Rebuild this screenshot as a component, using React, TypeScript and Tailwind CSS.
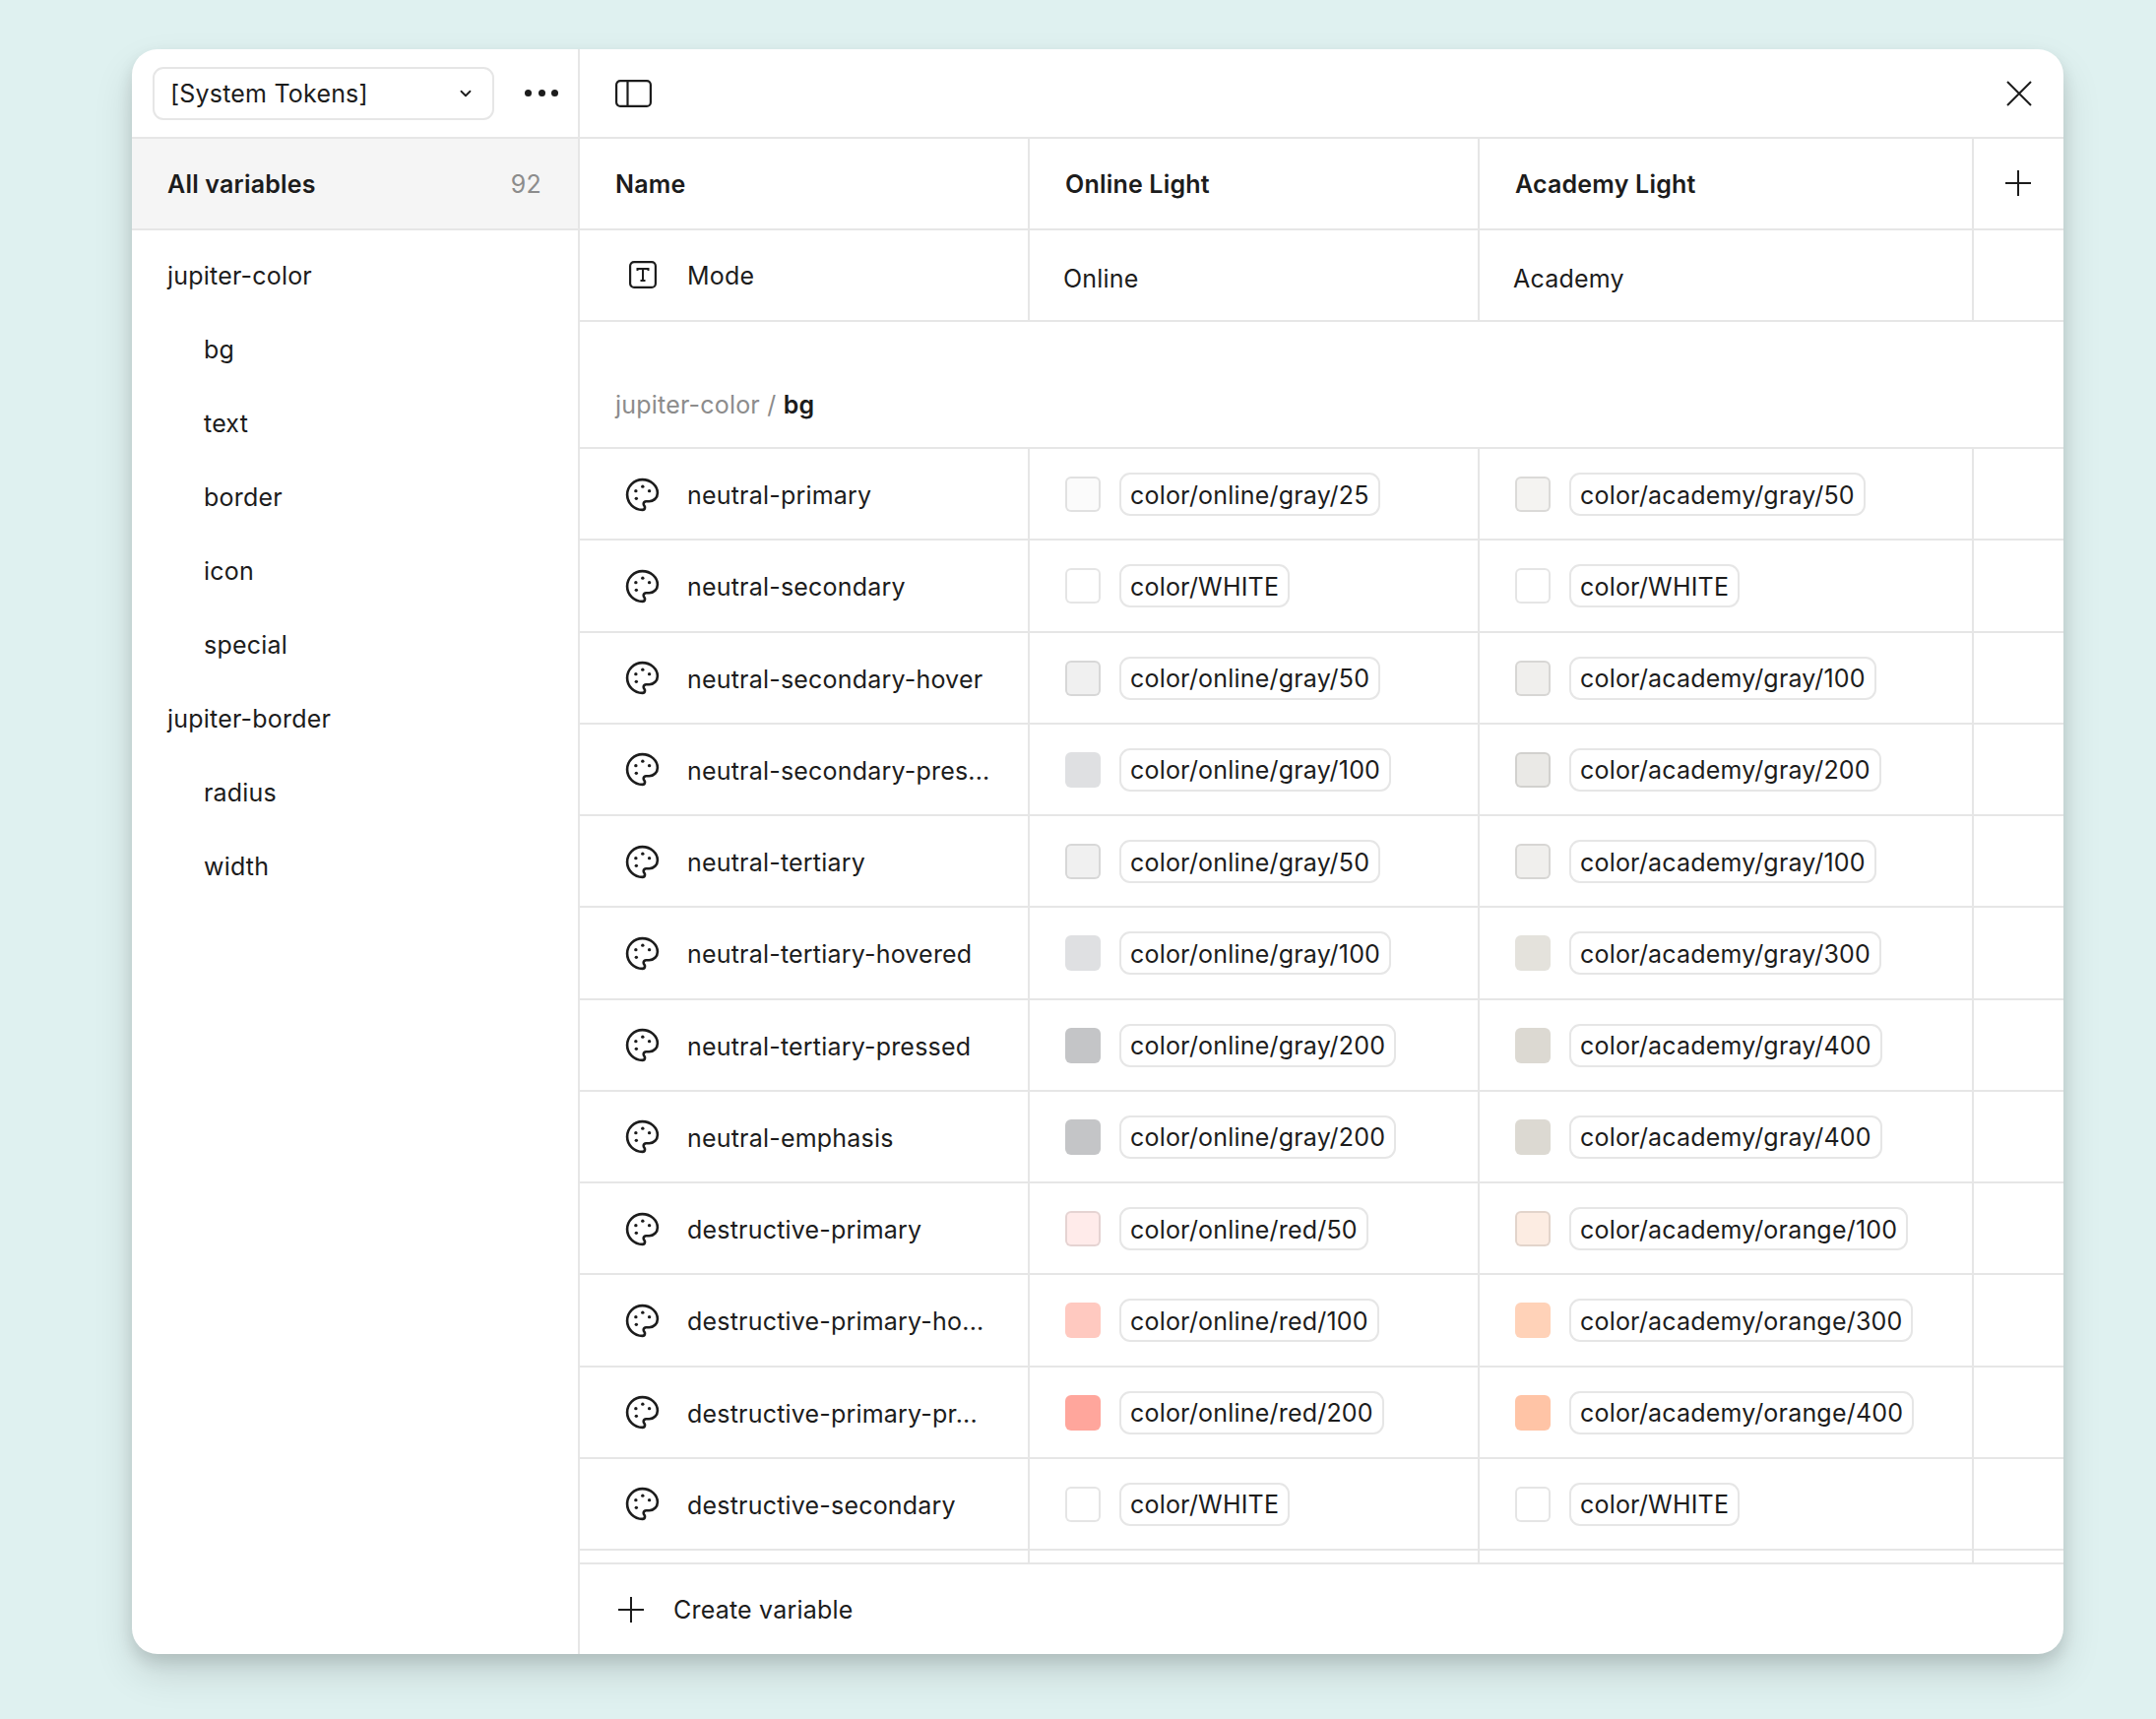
import React from "react";
import { ChevronDown } from "lucide-react";

type Cell = { label: string; color: string; edge?: boolean };
type Row = { name: string; online: Cell; academy: Cell };

const WHITE: Cell = { label: "color/WHITE", color: "#ffffff", edge: true };

const rows: Row[] = [
  { name: "neutral-primary", online: { label: "color/online/gray/25", color: "#fbfbfb", edge: true }, academy: { label: "color/academy/gray/50", color: "#f4f3f1", edge: true } },
  { name: "neutral-secondary", online: WHITE, academy: WHITE },
  { name: "neutral-secondary-hover", online: { label: "color/online/gray/50", color: "#f0f0f0", edge: true }, academy: { label: "color/academy/gray/100", color: "#f0efed", edge: true } },
  { name: "neutral-secondary-pres...", online: { label: "color/online/gray/100", color: "#dfe0e2" }, academy: { label: "color/academy/gray/200", color: "#eae9e6", edge: true } },
  { name: "neutral-tertiary", online: { label: "color/online/gray/50", color: "#f0f0f0", edge: true }, academy: { label: "color/academy/gray/100", color: "#f0efed", edge: true } },
  { name: "neutral-tertiary-hovered", online: { label: "color/online/gray/100", color: "#dfe0e2" }, academy: { label: "color/academy/gray/300", color: "#e4e2dc" } },
  { name: "neutral-tertiary-pressed", online: { label: "color/online/gray/200", color: "#c4c5c7" }, academy: { label: "color/academy/gray/400", color: "#dcd9d2" } },
  { name: "neutral-emphasis", online: { label: "color/online/gray/200", color: "#c4c5c7" }, academy: { label: "color/academy/gray/400", color: "#dcd9d2" } },
  { name: "destructive-primary", online: { label: "color/online/red/50", color: "#ffebea", edge: true }, academy: { label: "color/academy/orange/100", color: "#fcece2", edge: true } },
  { name: "destructive-primary-ho...", online: { label: "color/online/red/100", color: "#ffc9c0" }, academy: { label: "color/academy/orange/300", color: "#ffd2b8" } },
  { name: "destructive-primary-pr...", online: { label: "color/online/red/200", color: "#ffa69c" }, academy: { label: "color/academy/orange/400", color: "#ffc4a6" } },
  { name: "destructive-secondary", online: WHITE, academy: WHITE },
];

const groups = [
  { name: "jupiter-color", indent: false },
  { name: "bg", indent: true },
  { name: "text", indent: true },
  { name: "border", indent: true },
  { name: "icon", indent: true },
  { name: "special", indent: true },
  { name: "jupiter-border", indent: false },
  { name: "radius", indent: true },
  { name: "width", indent: true },
];

const gridCols = "grid grid-cols-[457px_457px_502px_1fr]";

const PaletteIcon = () => (
  <svg width="37" height="37" viewBox="0 0 24 24" fill="none" stroke="#1c1c1c" strokeWidth="1.7" strokeLinecap="round" strokeLinejoin="round">
    <path d="M12 2C6.5 2 2 6.5 2 12s4.5 10 10 10c.926 0 1.648-.746 1.648-1.688 0-.437-.18-.835-.437-1.125-.29-.289-.438-.652-.438-1.125a1.64 1.64 0 0 1 1.668-1.668h1.996c3.051 0 5.555-2.503 5.555-5.554C21.965 6.012 17.461 2 12 2z" />
    <g fill="#1c1c1c" stroke="none">
      <circle cx="12.2" cy="6.6" r="1.1" />
      <circle cx="16.6" cy="9.5" r="1.1" />
      <circle cx="7.7" cy="9.5" r="1.1" />
      <circle cx="8" cy="14.5" r="1.1" />
    </g>
  </svg>
);

const PlusIcon = () => (
  <svg width="28" height="28" viewBox="0 0 28 28" fill="none" stroke="#1c1c1c" strokeWidth="2">
    <path d="M14 1v26M1 14h26" />
  </svg>
);

const TokenCell = ({ cell }: { cell: Cell }) => (
  <div className="flex items-center border-r-2 border-[#e6e6e6] pl-[36px] pt-[1px]">
    <span
      className={`h-[36px] w-[36px] rounded-[6px] ${cell.edge ? "border-2 border-black/10" : ""}`}
      style={{ backgroundColor: cell.color }}
    />
    <span className="ml-[19px] flex h-[44px] items-center rounded-[11px] border-2 border-[#e6e6e6] px-[9px] pt-[1px]">{cell.label}</span>
  </div>
);

const App = () => (
  <div className="h-[1746px] w-[2190px] bg-[#dff1f0] pl-[134px] pt-[50px] font-['Inter',sans-serif] text-[25px] leading-[32px] tracking-[0.2px] text-[#1c1c1c]">
    <div className="flex h-[1630px] w-[1962px] overflow-hidden rounded-[26px] bg-white shadow-[0_8px_16px_rgba(0,0,0,0.12),0_20px_40px_rgba(0,0,0,0.12)]">
      {/* sidebar */}
      <div className="w-[455px] shrink-0 border-r-2 border-[#e6e6e6]">
        <div className="flex h-[90.7px] items-center border-b-2 border-[#e6e6e6] pl-[21px] pt-[1px]">
          <div className="flex h-[54px] w-[347px] items-center justify-between rounded-[11px] border-2 border-[#e6e6e6] pl-[16px] pr-[18px]">
            <span className="pt-[1px]">[System Tokens]</span>
            <ChevronDown size={18} strokeWidth={2.4} />
          </div>
          <div className="ml-[31px] flex items-center gap-[6.5px]">
            <span className="h-[7px] w-[7px] rounded-full bg-[#1c1c1c]" />
            <span className="h-[7px] w-[7px] rounded-full bg-[#1c1c1c]" />
            <span className="h-[7px] w-[7px] rounded-full bg-[#1c1c1c]" />
          </div>
        </div>
        <div className="flex h-[93px] items-center justify-between border-b-2 border-[#e6e6e6] bg-[#f5f5f5] pl-[36px] pr-[37px] pt-[2px]">
          <span className="font-semibold">All variables</span>
          <span className="text-[#8c8c8c]">92</span>
        </div>
        <div className="pt-[8px]">
          {groups.map((g) => (
            <div key={g.name} className={`flex h-[75px] items-center pt-[2px] ${g.indent ? "pl-[73px]" : "pl-[36px]"}`}>
              {g.name}
            </div>
          ))}
        </div>
      </div>

      {/* main */}
      <div className="flex min-w-0 flex-1 flex-col">
        <div className="flex h-[90.7px] items-center justify-between border-b-2 border-[#e6e6e6] pl-[36px] pr-[32px] pt-[2px]">
          <svg width="37" height="28" viewBox="0 0 37 28" fill="none" stroke="#1c1c1c" strokeWidth="2.2">
            <rect x="1.1" y="1.1" width="34.8" height="25.8" rx="4" />
            <path d="M12.5 1v26" />
          </svg>
          <svg width="26" height="26" viewBox="0 0 26 26" fill="none" stroke="#1c1c1c" strokeWidth="2">
            <path d="M1 1l24 24M25 1L1 25" />
          </svg>
        </div>

        <div className={`${gridCols} h-[93.3px] border-b-2 border-[#e6e6e6] font-semibold`}>
          <div className="flex items-center border-r-2 border-[#e6e6e6] pl-[36px] pt-[2px]">Name</div>
          <div className="flex items-center border-r-2 border-[#e6e6e6] pl-[36px] pt-[2px]">Online Light</div>
          <div className="flex items-center border-r-2 border-[#e6e6e6] pl-[36px] pt-[2px]">Academy Light</div>
          <div className="flex items-center pl-[31px]">
            <PlusIcon />
          </div>
        </div>

        <div className={`${gridCols} h-[93.3px] border-b-2 border-[#e6e6e6]`}>
          <div className="flex items-center border-r-2 border-[#e6e6e6] pl-[50px]">
            <svg width="28" height="28" viewBox="0 0 28 28" fill="none" stroke="#1c1c1c" strokeWidth="2.2">
              <rect x="1.1" y="1.1" width="25.8" height="25.8" rx="4" />
              <path d="M8.5 10V8h11v2M14 8v12M11.5 20h5" strokeWidth="2" />
            </svg>
            <span className="ml-[31px] pt-[2px]">Mode</span>
          </div>
          <div className="flex items-center border-r-2 border-[#e6e6e6] pl-[34px] pt-[7px]">Online</div>
          <div className="flex items-center border-r-2 border-[#e6e6e6] pl-[34px] pt-[7px]">Academy</div>
          <div />
        </div>

        <div className="h-[129.4px] border-b-2 border-[#e6e6e6] pl-[36px] pt-[68px]">
          <span className="text-[#8c8c8c]">jupiter-color / </span>
          <span className="font-semibold">bg</span>
        </div>

        <div className="flex-1">
          {rows.map((r) => (
            <div key={r.name} className={`${gridCols} h-[93.25px] border-b-2 border-[#e6e6e6]`}>
              <div className="flex items-center border-r-2 border-[#e6e6e6] pl-[45px] pt-[1px]">
                <PaletteIcon />
                <span className="ml-[27px] pt-[2px]">{r.name}</span>
              </div>
              <TokenCell cell={r.online} />
              <TokenCell cell={r.academy} />
              <div />
            </div>
          ))}
          <div className={`${gridCols} h-[12px]`}>
            <div className="border-r-2 border-[#e6e6e6]" />
            <div className="border-r-2 border-[#e6e6e6]" />
            <div className="border-r-2 border-[#e6e6e6]" />
            <div />
          </div>
        </div>

        <div className="flex h-[93px] shrink-0 items-center border-t-2 border-[#e6e6e6] pl-[38px]">
          <PlusIcon />
          <span className="ml-[29px]">Create variable</span>
        </div>
      </div>
    </div>
  </div>
);

export default App;
